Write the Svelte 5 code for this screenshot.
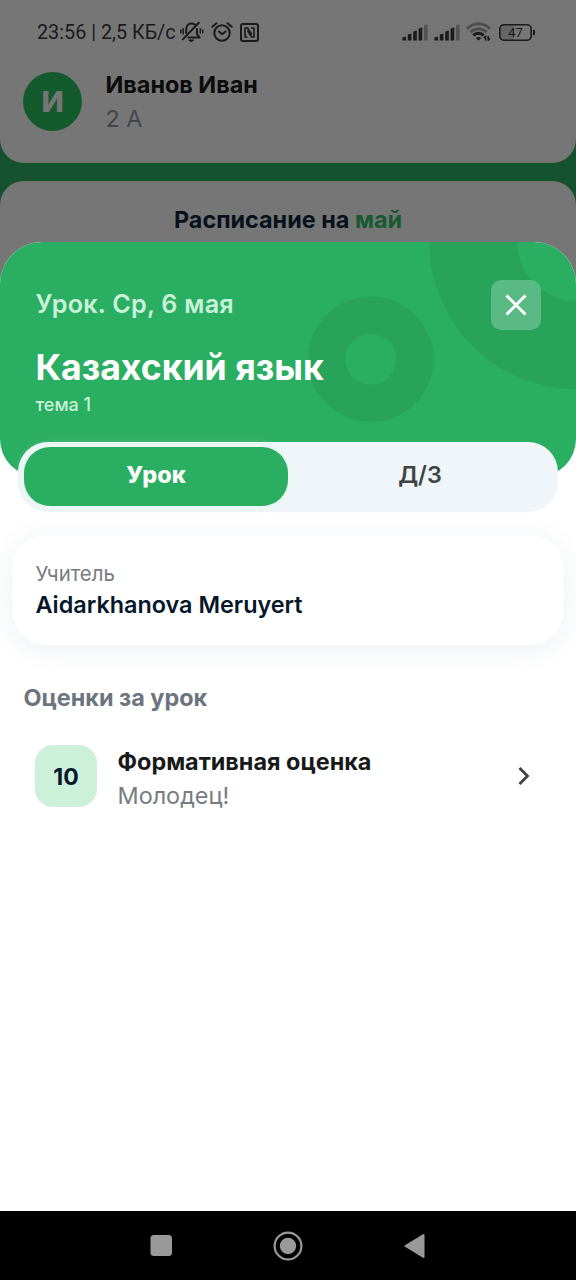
<script>
  const tabs = [
    { id: 'lesson', label: 'Урок' },
    { id: 'homework', label: 'Д/З' },
  ];
  let active = $state('lesson');
  const bars = [4, 7, 10, 13, 16];
</script>

{#snippet signal()}
  <svg class="signal" width="26" height="17" viewBox="0 0 26 17">
    {#each bars as h, i}
      <path d="M{0.4 + i * 5.4} 16.5v{1 - h}l3.600-1v{h}z" fill={i === 4 ? '#525252' : '#1b1b1b'} />
    {/each}
  </svg>
{/snippet}

<div class="screen">
  <div class="profile-card">
    <div class="status">
      <span class="clock">23:56 | 2,5 КБ/с</span>
      <svg class="bell" width="24" height="22" viewBox="0 0 24 22" fill="none" stroke="#1b1b1b" stroke-width="2" stroke-linecap="round" stroke-linejoin="round">
        <path d="M6.200 12V9C6.200 5 8.400 2.500 11.500 2.500c1.500 0 2.600.400 3.500 1.200M17 8v5.200l2.600 3.200H8.300" />
        <path d="M2.800 18.400 18.800 1.800" />
        <path d="M3.200 7.700v5.400M.9 9v2.800M20.300 7.700v4.400M22.700 9v2.800" stroke-width="1.500" />
        <path d="M9.100 19h4.800l-2.400 1.500z" fill="#1b1b1b" stroke-width="1" />
      </svg>
      <svg class="alarm" width="22" height="20" viewBox="0 0 22 20" fill="none" stroke="#1b1b1b" stroke-width="2" stroke-linecap="round" stroke-linejoin="round">
        <circle cx="11" cy="11" r="7.700" />
        <path d="M1.300 4.800 5.500 1.200M20.700 4.800 16.500 1.200M8 9.500l3 2.800 3.600-2.800" />
      </svg>
      <svg class="nfc" width="19" height="19" viewBox="0 0 19 19" fill="none" stroke="#1b1b1b" stroke-width="2" stroke-linejoin="round">
        <rect x="1" y="1" width="17" height="17" rx="2" />
        <path d="M7.500 14H5V5h2.500l4.300 6.500M11 5h3v9h-2.500L7.500 7.500" stroke-width="1.600" />
      </svg>
      <span class="grow"></span>
      {@render signal()}
      {@render signal()}
      <svg class="wifi" width="25" height="20" viewBox="0 0 25 20" fill="none" stroke-width="2.600">
        <path d="M1 6.700C7.500.300 17.500.300 24 6.700" stroke="#4c4c4c" />
        <path d="M4.400 10.200c4.700-4.400 11.500-4.400 16.200 0" stroke="#4c4c4c" />
        <path d="M7.300 13.300c2.900-2.800 7.500-2.800 10.400 0" stroke="#1b1b1b" stroke-width="3" />
        <path d="m12.500 18.600-2.800-2.500q2.800-2.100 5.600 0z" fill="#1b1b1b" />
        <path d="M19.600 13.800v5M17.800 16.300l1.800-2.300M22.200 13.800v5M22.200 18.600l1.800-2.300" stroke="#1b1b1b" stroke-width="1.500" />
      </svg>
      <span class="battery">47</span>
    </div>
    <div class="profile">
      <div class="avatar">И</div>
      <div>
        <div class="name">Иванов Иван</div>
        <div class="grade">2 А</div>
      </div>
    </div>
  </div>

  <div class="schedule"><span>Расписание на <b>май</b></span></div>

  <section class="sheet">
    <header>
      <svg class="rings" width="576" height="236" viewBox="0 0 576 236" fill="none" stroke="#27a35a">
        <circle cx="576" cy="0.500" r="102.500" stroke-width="88" />
        <circle cx="370.800" cy="117.200" r="44" stroke-width="37" />
      </svg>
      <div class="top">
        <span class="date">Урок. Ср, 6 мая</span>
        <button class="close" aria-label="Закрыть">
          <svg width="22" height="22" viewBox="0 0 22 22" stroke="#fff" stroke-width="3"><path d="m1.500 1.500 19 19M20.500 1.500l-19 19" /></svg>
        </button>
      </div>
      <h1>Казахский язык</h1>
      <p class="topic">тема 1</p>
    </header>

    <nav class="tabs">
      {#each tabs as tab}
        <button class:active={active === tab.id} onclick={() => (active = tab.id)}>{tab.label}</button>
      {/each}
    </nav>

    <div class="teacher">
      <div class="label">Учитель</div>
      <div class="person">Aidarkhanova Meruyert</div>
    </div>

    <h2>Оценки за урок</h2>
    <div class="mark">
      <div class="score">10</div>
      <div class="info">
        <div class="kind">Формативная оценка</div>
        <div class="comment">Молодец!</div>
      </div>
      <svg width="14" height="20" viewBox="0 0 14 20" fill="none" stroke="#3f4147" stroke-width="2.800"><path d="m2.500 2 8 8-8 8" /></svg>
    </div>
  </section>

  <footer>
    <svg width="22" height="22" viewBox="0 0 22 22"><rect x="0.500" width="21.500" height="21" rx="3.500" fill="#999" /></svg>
    <svg width="30" height="30" viewBox="0 0 30 30"><circle cx="15" cy="15" r="13.400" fill="none" stroke="#999" stroke-width="2.200" /><circle cx="15" cy="15" r="8.200" fill="#999" /></svg>
    <svg width="22" height="26" viewBox="0 0 22 26"><path d="M1.500 13 19.500 2v22z" fill="#999" stroke="#999" stroke-width="2" stroke-linejoin="round" /></svg>
  </footer>
</div>

<style>
  :global(body) { margin: 0; }
  .screen {
    width: 576px;
    height: 1280px;
    overflow: hidden;
    display: flex;
    flex-direction: column;
    background: #14532d;
    font-family: Inter, sans-serif;
  }
  .screen :global(*) { box-sizing: border-box; }
  svg { display: block; flex: none; }
  span, .name, .grade, .label, .person, .kind, .comment, h1, h2, .topic { white-space: nowrap; }
  .profile-card {
    height: 163px;
    flex: none;
    background: #767676;
    border-radius: 0 0 24px 24px;
  }
  .status {
    height: 64px;
    padding: 0 44px 0 37px;
    display: flex;
    align-items: center;
    color: #1b1b1b;
  }
  .clock { padding-top: 2px; font: 400 19.800px/24px Roboto, sans-serif; width: 143px; }
  .alarm { margin-left: 7px; }
  .nfc { margin-left: 7px; }
  .grow { flex: 1; }
  .signal { margin-right: 6px; }
  .wifi { margin-right: 8px; }
  .battery {
    position: relative;
    width: 33px;
    height: 17px;
    border-radius: 5px;
    box-shadow: inset 0 0 0 1.600px #1b1b1b;
    background: linear-gradient(90deg, #656565 45%, transparent 45%);
    font: 400 13px/17px Roboto, sans-serif;
    text-align: center;
  }
  .battery::after {
    content: '';
    position: absolute;
    right: -3px;
    top: 6px;
    width: 2px;
    height: 5px;
    background: #1b1b1b;
  }
  .profile { display: flex; gap: 23.500px; padding: 7px 24px 0 23px; }
  .avatar {
    width: 59px;
    height: 59px;
    margin-top: 1px;
    border-radius: 50%;
    background: #135a2d;
    color: #767676;
    font: 800 29px/59px Inter, sans-serif;
    text-align: center;
  }
  .name { font-weight: 700; font-size: 23.400px; line-height: 28px; color: #0c0c0c; }
  .grade { margin-top: 6px; font-size: 23.400px; line-height: 28px; color: #45464b; }
  .schedule {
    height: 121px;
    flex: none;
    margin-top: 18px;
    margin-bottom: -60px;
    padding-top: 25px;
    border-radius: 24px 24px 0 0;
    background: #767676;
    color: #07111c;
    font-weight: 700;
    font-size: 23.400px;
    line-height: 28px;
    text-align: center;
  }
  .schedule b { font-weight: 700; color: #175a31; }
  .sheet {
    position: relative;
    flex: 1;
    background: #fff;
    border-radius: 42px 42px 0 0;
  }
  header {
    position: relative;
    height: 235px;
    padding: 38px 35px 0 35.500px;
    border-radius: 42px 42px 38px 38px;
    background: #2aae61;
    overflow: hidden;
  }
  .rings { position: absolute; left: 0; top: 0; }
  .top { position: relative; display: flex; justify-content: space-between; align-items: center; height: 50px; }
  .date { padding-bottom: 2px; color: #caf2da; font-weight: 600; font-size: 25.200px; letter-spacing: 0.250px; }
  .close {
    width: 50px;
    height: 50px;
    border: 0;
    border-radius: 10px;
    background: #5aba83;
    display: grid;
    place-items: center;
    padding: 0;
  }
  h1 { position: relative; margin: 16px 0 0; font-weight: 700; font-size: 35.600px; line-height: 44px; color: #fff; }
  .topic { margin: 4px 0 0; font-weight: 500; font-size: 18px; line-height: 22px; color: #caf2da; }
  .tabs {
    position: relative;
    display: flex;
    width: 540px;
    height: 70px;
    margin: -35px 0 0 18px;
    padding: 5px 6px 6px;
    border-radius: 30px;
    background: #f0f5f9;
  }
  .tabs button {
    flex: 1;
    border: 0;
    padding: 0 0 4px;
    border-radius: 26px;
    background: none;
    font: 600 23.400px/28px Inter, sans-serif;
    color: #404440;
  }
  .tabs .active {
    background: #2aae61;
    color: #fff;
    font-weight: 800;
    box-shadow: 0 0 12px rgb(215 255 232 / 0.600);
  }
  .teacher {
    height: 110px;
    margin: 23px 12px 0;
    padding: 27px 23.500px 0;
    border-radius: 34px;
    background: #fff;
    box-shadow: 0 4px 26px rgb(80 110 140 / 0.110);
  }
  .label { font-size: 20.400px; line-height: 24px; color: #777b80; }
  .person { margin-top: 5px; font-weight: 600; font-size: 23.400px; line-height: 28px; color: #07172a; }
  h2 { margin: 39px 23.500px 0; font-weight: 700; font-size: 23.400px; line-height: 28px; color: #6c757d; }
  .mark { display: flex; align-items: center; height: 62px; margin-top: 33px; padding: 0 45px 0 35px; }
  .score {
    width: 62px;
    height: 62px;
    border-radius: 18px;
    background: #cdf0db;
    color: #07172a;
    font-weight: 700;
    font-size: 23px;
    line-height: 65px;
    text-align: center;
  }
  .info { flex: 1; padding: 5px 0 0 20.500px; }
  .kind { font-weight: 700; font-size: 23.400px; line-height: 28px; color: #181a19; }
  .comment { margin-top: 6px; font-size: 23.400px; line-height: 28px; color: #777c82; }
  footer {
    height: 69px;
    flex: none;
    padding: 0 150px;
    display: flex;
    align-items: center;
    justify-content: space-between;
    background: #000;
  }
</style>
